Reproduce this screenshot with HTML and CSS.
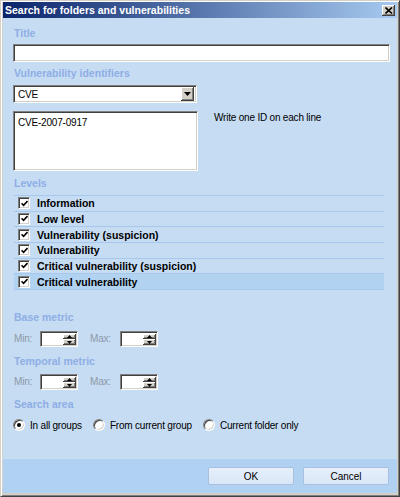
FILE: index.html
```html
<!DOCTYPE html>
<html lang="en">
<head>
	<meta charset="UTF-8">
	<title>Search for folders and vulnerabilities</title>
	<link rel="stylesheet" href="styles.css">
</head>
<body>
	<div class="window">
		<div class="titlebar">
			<span class="caption">Search for folders and vulnerabilities</span>
			<span class="close">
				<svg width="8" height="7" viewBox="0 0 8 7"><path d="M0.5 0.5L7 6.5M7 0.5L0.5 6.5" stroke="#000" stroke-width="1.6"/></svg>
			</span>
		</div>

		<div class="content">
			<div class="group-label lbl-title">Title</div>
			<div class="sunken title-field"></div>

			<div class="group-label lbl-ids">Vulnerability identifiers</div>
			<div class="sunken combo">
				<span class="combo-text">CVE</span>
				<span class="raised combo-btn">
					<svg width="7" height="4" viewBox="0 0 7 4"><path d="M0 0H7L3.5 4Z" fill="#000"/></svg>
				</span>
			</div>

			<div class="ids">
				<div class="sunken memo">CVE-2007-0917</div>
				<div class="hint">Write one ID on each line</div>
			</div>

			<div class="group-label lbl-levels">Levels</div>
			<ul class="levels">
				<li><span class="check"><svg width="7" height="7" viewBox="0 0 7 7"><path d="M0.5 3.2L2.6 5.4L6.5 1" fill="none" stroke="#000" stroke-width="1.6"/></svg></span>Information</li>
				<li><span class="check"><svg width="7" height="7" viewBox="0 0 7 7"><path d="M0.5 3.2L2.6 5.4L6.5 1" fill="none" stroke="#000" stroke-width="1.6"/></svg></span>Low level</li>
				<li><span class="check"><svg width="7" height="7" viewBox="0 0 7 7"><path d="M0.5 3.2L2.6 5.4L6.5 1" fill="none" stroke="#000" stroke-width="1.6"/></svg></span>Vulnerability (suspicion)</li>
				<li><span class="check"><svg width="7" height="7" viewBox="0 0 7 7"><path d="M0.5 3.2L2.6 5.4L6.5 1" fill="none" stroke="#000" stroke-width="1.6"/></svg></span>Vulnerability</li>
				<li><span class="check"><svg width="7" height="7" viewBox="0 0 7 7"><path d="M0.5 3.2L2.6 5.4L6.5 1" fill="none" stroke="#000" stroke-width="1.6"/></svg></span>Critical vulnerability (suspicion)</li>
				<li class="current"><span class="check"><svg width="7" height="7" viewBox="0 0 7 7"><path d="M0.5 3.2L2.6 5.4L6.5 1" fill="none" stroke="#000" stroke-width="1.6"/></svg></span>Critical vulnerability</li>
			</ul>

			<div class="group-label lbl-base">Base metric</div>
			<div class="metric metric-base">
				<span class="mlabel">Min:</span>
				<span class="sunken spin"><span class="spin-btns"><span class="raised spin-up"><svg width="5" height="3" viewBox="0 0 5 3"><path d="M0 3H5L2.5 0Z" fill="#000"/></svg></span><span class="raised spin-down"><svg width="5" height="3" viewBox="0 0 5 3"><path d="M0 0H5L2.5 3Z" fill="#000"/></svg></span></span></span>
				<span class="mlabel max">Max:</span>
				<span class="sunken spin"><span class="spin-btns"><span class="raised spin-up"><svg width="5" height="3" viewBox="0 0 5 3"><path d="M0 3H5L2.5 0Z" fill="#000"/></svg></span><span class="raised spin-down"><svg width="5" height="3" viewBox="0 0 5 3"><path d="M0 0H5L2.5 3Z" fill="#000"/></svg></span></span></span>
			</div>

			<div class="group-label lbl-temp">Temporal metric</div>
			<div class="metric metric-temp">
				<span class="mlabel">Min:</span>
				<span class="sunken spin"><span class="spin-btns"><span class="raised spin-up"><svg width="5" height="3" viewBox="0 0 5 3"><path d="M0 3H5L2.5 0Z" fill="#000"/></svg></span><span class="raised spin-down"><svg width="5" height="3" viewBox="0 0 5 3"><path d="M0 0H5L2.5 3Z" fill="#000"/></svg></span></span></span>
				<span class="mlabel max">Max:</span>
				<span class="sunken spin"><span class="spin-btns"><span class="raised spin-up"><svg width="5" height="3" viewBox="0 0 5 3"><path d="M0 3H5L2.5 0Z" fill="#000"/></svg></span><span class="raised spin-down"><svg width="5" height="3" viewBox="0 0 5 3"><path d="M0 0H5L2.5 3Z" fill="#000"/></svg></span></span></span>
			</div>

			<div class="group-label lbl-area">Search area</div>
			<div class="radios">
				<span class="radio on"></span><span class="rtext">In all groups</span>
				<span class="radio"></span><span class="rtext">From current group</span>
				<span class="radio"></span><span class="rtext">Current folder only</span>
			</div>
		</div>

		<div class="footer">
			<button class="btn">OK</button>
			<button class="btn">Cancel</button>
		</div>
	</div>
</body>
</html>
```

FILE: styles.css
```css
*{
	margin: 0;
	padding: 0;
	box-sizing: border-box;
}
body{
	font-family: "Liberation Sans", Arial, sans-serif;
	font-size: 10px;
	letter-spacing: -0.2px;
	color: #000;
	background: #d4d0c8;
}
.window{
	width: 400px;
	height: 497px;
	display: flex;
	flex-direction: column;
	border: 1px solid;
	border-color: #d4d0c8 #404040 #404040 #d4d0c8;
	box-shadow: inset 1px 1px #fff, inset -1px -1px #808080;
	padding: 1px 2px 3px 2px;
	background: #d4d0c8;
}

/* title bar */
.titlebar{
	height: 16px;
	display: flex;
	align-items: center;
	justify-content: space-between;
	padding: 0 2px 0 2px;
	background: linear-gradient(to right, #0a246a, #a6caf0);
}
.caption{
	color: #fff;
	font-weight: bold;
	font-size: 10.5px;
	letter-spacing: 0;
}
.close{
	width: 13px;
	height: 11px;
	display: flex;
	align-items: center;
	justify-content: center;
	background: #d4d0c8;
	box-shadow: inset -1px -1px #404040, inset 1px 1px #fff, inset -2px -2px #808080;
}

/* body */
.content{
	flex: 1;
	background: #c6dcf2;
	padding: 0 8px 0 10px;
}
.group-label{
	color: #8eaee6;
	font-weight: bold;
	font-size: 10.5px;
	letter-spacing: 0;
	line-height: 13px;
	padding-left: 1px;
}
.lbl-title{ margin-top: 9px; }
.lbl-ids{ margin-top: 5px; }
.lbl-levels{ margin-top: 6px; }
.lbl-base{ margin-top: 21px; }
.lbl-temp{ margin-top: 8px; }
.lbl-area{ margin-top: 8px; }

.sunken{
	background: #fff;
	border: 1px solid;
	border-color: #808080 #fff #fff #808080;
	box-shadow: inset 1px 1px #404040, inset -1px -1px #d4d0c8;
}
.raised{
	background: #d4d0c8;
	box-shadow: inset -1px -1px #404040, inset 1px 1px #fff, inset -2px -2px #808080;
	display: flex;
	align-items: center;
	justify-content: center;
}

.title-field{
	height: 18px;
	width: 377px;
	margin-top: 4px;
}
.combo{
	width: 184px;
	height: 18px;
	margin-top: 5px;
	display: flex;
	align-items: center;
	justify-content: space-between;
	padding: 2px;
}
.combo-text{
	padding-left: 2px;
}
.combo-btn{
	width: 13px;
	height: 14px;
}

.ids{
	display: flex;
	margin-top: 8px;
}
.memo{
	width: 185px;
	height: 60px;
	padding: 5px 4px;
	line-height: 12px;
}
.hint{
	margin-left: 16px;
	padding-top: 1px;
	line-height: 12px;
}

.levels{
	list-style: none;
	width: 370px;
	margin: 5px 0 0 1px;
	border-top: 1px solid #a6c8ee;
}
.levels li{
	height: 15.67px;
	border-bottom: 1px solid #a6c8ee;
	display: flex;
	align-items: center;
	padding-left: 4px;
	font-weight: bold;
	font-size: 10.5px;
	letter-spacing: 0;
}
.levels li.current{
	background: #b2d2f2;
}
.check{
	width: 12px;
	height: 12px;
	margin-right: 7px;
	background: #fff;
	border: 1px solid;
	border-color: #808080 #fff #fff #808080;
	box-shadow: inset 1px 1px #404040, inset -1px -1px #d4d0c8;
	display: flex;
	align-items: center;
	justify-content: center;
}

.metric{
	display: flex;
	align-items: center;
	height: 16px;
}
.metric-base{ margin-top: 7px; }
.metric-temp{ margin-top: 6px; }
.mlabel{
	color: #8d99a8;
	width: 27px;
	padding-left: 1px;
}
.mlabel.max{
	width: 31px;
	margin-left: 11px;
}
.spin{
	width: 38px;
	height: 16px;
	display: flex;
	justify-content: flex-end;
	padding: 2px 1px 1px 2px;
}
.spin-btns{
	width: 13px;
	display: flex;
	flex-direction: column;
}
.spin-up,.spin-down{
	flex: 1;
}

.radios{
	display: flex;
	align-items: center;
	margin-top: 8px;
	height: 13px;
}
.radio{
	width: 12px;
	height: 12px;
	border-radius: 50%;
	background: #fff;
	border: 1px solid;
	border-color: #808080 #fff #fff #808080;
	box-shadow: inset 1px 1px #404040, inset -1px -1px #d4d0c8;
	margin-right: 5px;
	position: relative;
}
.radio.on::after{
	content: "";
	position: absolute;
	left: 3px;
	top: 3px;
	width: 4px;
	height: 4px;
	border-radius: 50%;
	background: #000;
}
.rtext{
	margin-right: 11px;
}

/* footer */
.footer{
	height: 35px;
	background: #b1d1f3;
	border-top: 1px solid #c8def6;
	display: flex;
	justify-content: flex-end;
	align-items: flex-start;
	padding: 8px 8px 0 0;
	gap: 9px;
}
.btn{
	width: 86px;
	height: 18px;
	font-family: "Liberation Sans", Arial, sans-serif;
	font-size: 10px;
	color: #000;
	background: linear-gradient(#e6effb, #d9e7f8);
	border: 1px solid #a9c1de;
	border-radius: 2px;
}
```
